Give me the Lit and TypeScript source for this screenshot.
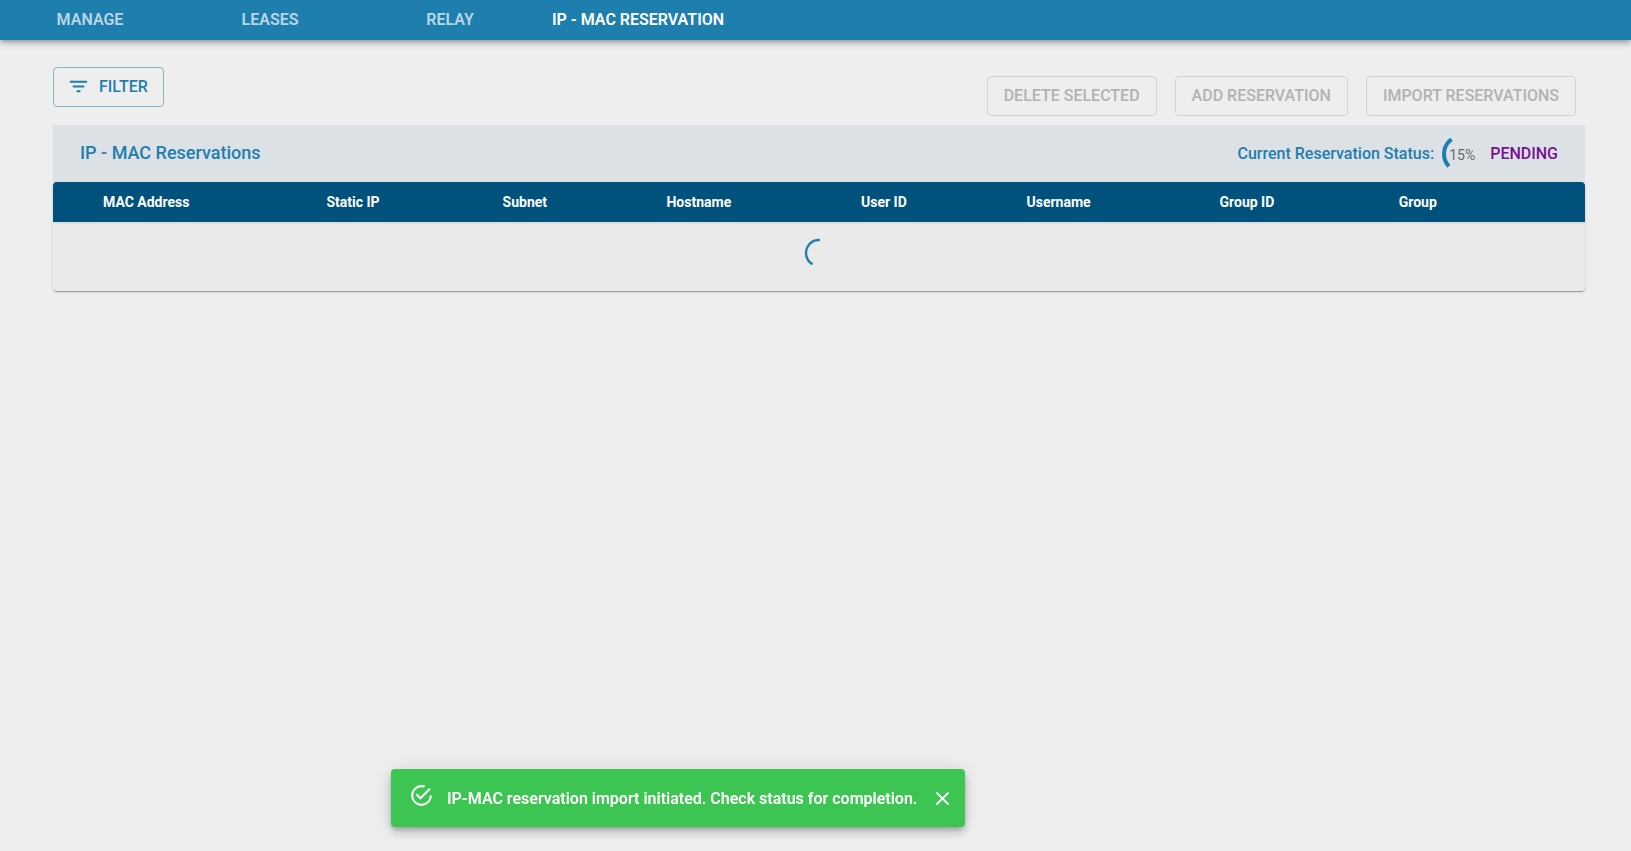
import { LitElement, html, css } from "lit";
import { customElement, state } from "lit/decorators.js";

const TABS = ["MANAGE", "LEASES", "RELAY", "IP - MAC RESERVATION"];
const ACTIONS = ["DELETE SELECTED", "ADD RESERVATION", "IMPORT RESERVATIONS"];
const COLUMNS = [
  { label: "MAC Address", width: 16.8 },
  { label: "Static IP", width: 11.5 },
  { label: "Subnet", width: 10.7 },
  { label: "Hostname", width: 12.7 },
  { label: "User ID", width: 10.8 },
  { label: "Username", width: 12.6 },
  { label: "Group ID", width: 11.7 },
  { label: "Group", width: 13.2 },
];

@customElement("app-root")
export class AppRoot extends LitElement {
  @state() private current = 3;
  @state() private toastOpen = true;

  static styles = css`
    :host {
      display: block;
      min-height: 100vh;
      background: #eeeeee;
      font-family: Roboto, "Liberation Sans", sans-serif;
      font-size: 16px;
      color: #1e7eae;
    }
    * {
      box-sizing: border-box;
    }
    button {
      font: inherit;
      color: inherit;
      background: none;
      border: 0;
      margin: 0;
      cursor: pointer;
    }
    svg {
      display: block;
      flex: none;
    }
    .tabs {
      display: flex;
      height: 40px;
      background: #1e7eae;
      box-shadow: 0 2px 4px -1px rgba(0, 0, 0, 0.2),
        0 4px 5px 0 rgba(0, 0, 0, 0.14), 0 1px 10px 0 rgba(0, 0, 0, 0.12);
    }
    .tab {
      display: flex;
      align-items: center;
      justify-content: center;
      min-width: 180px;
      padding: 0 12px 2px;
      font-weight: 600;
      color: rgba(255, 255, 255, 0.7);
      text-decoration: none;
      white-space: nowrap;
    }
    .tab.current {
      color: #ffffff;
    }
    main {
      padding: 27px 46px 0 53px;
    }
    .toolbar {
      display: flex;
      justify-content: space-between;
      align-items: flex-start;
      padding-bottom: 9px;
    }
    .actions {
      display: flex;
      gap: 18px;
      padding: 9px 9px 0 0;
    }
    .btn {
      display: flex;
      align-items: center;
      gap: 8px;
      height: 40px;
      padding: 0 16px 2px;
      border: 1px solid rgba(30, 126, 174, 0.5);
      border-radius: 4px;
      font-weight: 500;
      white-space: nowrap;
    }
    .filter {
      padding: 0 15px 1px 13px;
      gap: 9px;
    }
    .btn:disabled {
      color: #b2b2b2;
      border-color: #d2d2d2;
      cursor: default;
    }
    .heading {
      display: flex;
      justify-content: space-between;
      align-items: center;
      height: 57px;
      padding: 0 27px;
      background: #dce1e5;
    }
    h1 {
      margin: 0;
      padding-bottom: 2px;
      font-size: 18px;
      font-weight: 500;
    }
    .status {
      display: flex;
      align-items: center;
      gap: 8px;
      font-weight: 500;
    }
    .progress {
      display: grid;
      place-items: center;
    }
    .progress > * {
      grid-area: 1 / 1;
    }
    .percent {
      padding-top: 3px;
      font-size: 14px;
      font-weight: 400;
      color: #6a6a6a;
    }
    .pending {
      color: #7a0f94;
    }
    .card {
      border-radius: 4px;
      overflow: hidden;
      background: #eaeaea;
      box-shadow: 0 2px 1px -1px rgba(0, 0, 0, 0.2),
        0 1px 1px 0 rgba(0, 0, 0, 0.14), 0 1px 3px 0 rgba(0, 0, 0, 0.12);
    }
    table {
      width: 100%;
      border-collapse: separate;
      border-spacing: 0;
      table-layout: fixed;
    }
    th {
      height: 40px;
      padding: 0 16px;
      background: #00527d;
      color: #ffffff;
      font-size: 14px;
      font-weight: 700;
      text-align: left;
      white-space: nowrap;
    }
    th:first-child {
      padding-left: 50px;
    }
    td {
      height: 69px;
      padding: 0 0 9px;
      border-top: 2px solid #dfdfdf;
    }
    .loader {
      margin: 0 auto;
    }
    .toast {
      position: fixed;
      left: 391px;
      bottom: 24px;
      display: flex;
      align-items: center;
      height: 58px;
      padding: 0 11px 0 18px;
      border-radius: 4px;
      background: #3dc553;
      color: #ffffff;
      font-weight: 600;
      white-space: nowrap;
      box-shadow: 0 3px 5px -1px rgba(0, 0, 0, 0.2),
        0 6px 10px 0 rgba(0, 0, 0, 0.14), 0 1px 18px 0 rgba(0, 0, 0, 0.12);
    }
    .check {
      margin: 0 13px 6px 0;
    }
    .close {
      margin-left: 14px;
      padding: 0;
    }
  `;

  private arc(size: number, radius: number, stroke: number, dash: number, start: number, cls = "") {
    const c = size / 2;
    return html`<svg class=${cls} width=${size} height=${size} viewBox="0 0 ${size} ${size}" aria-hidden="true">
      <circle cx=${c} cy=${c} r=${radius} fill="none" stroke="#1e7eae" stroke-width=${stroke}
        pathLength="360" stroke-dasharray="${dash} 360" transform="rotate(${start} ${c} ${c})"></circle>
    </svg>`;
  }

  render() {
    return html`
      <nav class="tabs">
        ${TABS.map(
          (t, i) => html`<a class="tab ${i === this.current ? "current" : ""}" href="#"
            @click=${(e: Event) => { e.preventDefault(); this.current = i; }}>${t}</a>`
        )}
      </nav>
      <main>
        <div class="toolbar">
          <button class="btn filter">
            <svg width="23" height="23" viewBox="0 0 24 24" fill="currentColor" aria-hidden="true">
              <path d="M10 18h4v-2h-4v2zM3 6v2h18V6H3zm3 7h12v-2H6v2z"></path>
            </svg>
            FILTER
          </button>
          <div class="actions">
            ${ACTIONS.map((a) => html`<button class="btn" disabled>${a}</button>`)}
          </div>
        </div>
        <div class="heading">
          <h1>IP - MAC Reservations</h1>
          <div class="status">
            <span>Current Reservation Status:</span>
            <span class="progress">
              ${this.arc(40, 18, 4, 98, 137)}
              <span class="percent">15%</span>
            </span>
            <span class="pending">PENDING</span>
          </div>
        </div>
        <div class="card">
          <table>
            <thead>
              <tr>
                ${COLUMNS.map((c) => html`<th scope="col" style="width:${c.width}%">${c.label}</th>`)}
              </tr>
            </thead>
            <tbody>
              <tr>
                <td colspan="8">${this.arc(30, 13, 2.4, 154, 120, "loader")}</td>
              </tr>
            </tbody>
          </table>
        </div>
      </main>
      ${this.toastOpen
        ? html`<div class="toast" role="alert">
            <svg class="check" width="25" height="25" viewBox="0 0 24 24" fill="currentColor" aria-hidden="true">
              <path d="M20,12A8,8 0 0,1 12,20A8,8 0 0,1 4,12A8,8 0 0,1 12,4C12.76,4 13.5,4.11 14.2,4.31L15.77,2.74C14.61,2.26 13.34,2 12,2A10,10 0 0,0 2,12A10,10 0 0,0 12,22A10,10 0 0,0 22,12M7.91,10.08L6.5,11.5L11,16L21,6L19.59,4.58L11,13.17L7.91,10.08Z"></path>
            </svg>
            <span>IP-MAC reservation import initiated. Check status for completion.</span>
            <button class="close" aria-label="Close" @click=${() => (this.toastOpen = false)}>
              <svg width="23" height="23" viewBox="0 0 24 24" fill="currentColor" aria-hidden="true">
                <path d="M19 6.41L17.59 5 12 10.59 6.41 5 5 6.41 10.59 12 5 17.59 6.41 19 12 13.41 17.59 19 19 17.59 13.41 12z"></path>
              </svg>
            </button>
          </div>`
        : ""}
    `;
  }
}
